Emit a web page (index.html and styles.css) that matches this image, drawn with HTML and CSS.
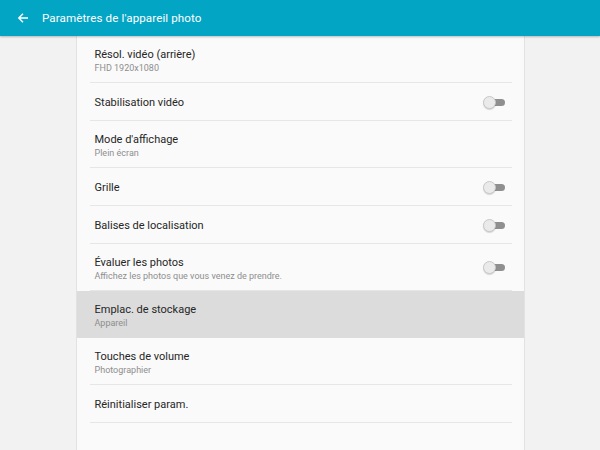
FILE: index.html
```html
<!DOCTYPE html>
<html>
<head>
<meta charset="utf-8">
<title>Paramètres de l'appareil photo</title>
<link rel="stylesheet" href="styles.css">
</head>
<body>
<header class="appbar">
  <svg class="back" width="12" height="12" viewBox="0 0 12 12"><path d="M11 6H2M6 1.8L1.8 6 6 10.2" fill="none" stroke="#fff" stroke-width="1.4"/></svg>
  <h1>Paramètres de l'appareil photo</h1>
</header>
<main class="panel">
  <ul class="settings">
    <li class="row"><div class="inner"><div class="text"><p class="title">Résol. vidéo (arrière)</p><p class="sub">FHD 1920x1080</p></div></div></li>
    <li class="row single"><div class="inner"><div class="text"><p class="title">Stabilisation vidéo</p></div><span class="switch"></span></div></li>
    <li class="row"><div class="inner"><div class="text"><p class="title">Mode d'affichage</p><p class="sub">Plein écran</p></div></div></li>
    <li class="row single"><div class="inner"><div class="text"><p class="title">Grille</p></div><span class="switch"></span></div></li>
    <li class="row single"><div class="inner"><div class="text"><p class="title">Balises de localisation</p></div><span class="switch"></span></div></li>
    <li class="row"><div class="inner"><div class="text"><p class="title">Évaluer les photos</p><p class="sub">Affichez les photos que vous venez de prendre.</p></div><span class="switch"></span></div></li>
    <li class="row pressed"><div class="inner"><div class="text"><p class="title">Emplac. de stockage</p><p class="sub">Appareil</p></div></div></li>
    <li class="row"><div class="inner"><div class="text"><p class="title">Touches de volume</p><p class="sub">Photographier</p></div></div></li>
    <li class="row single"><div class="inner"><div class="text"><p class="title">Réinitialiser param.</p></div></div></li>
  </ul>
</main>
</body>
</html>
```
FILE: styles.css
```css
html, body { margin: 0; padding: 0; }
body { background: #f2f2f2; font-family: Roboto, "Liberation Sans", sans-serif; color: #222; overflow: hidden; }
.appbar { position: relative; z-index: 1; display: flex; align-items: center; height: 36px; padding-left: 17px; background: #03a5c5; box-shadow: 0 1px 2px rgba(0, 0, 0, .25); }
.appbar .back { display: block; }
.appbar h1 { margin: 0 0 0 13px; font-size: 11.6px; font-weight: 400; color: #fff; letter-spacing: .1px; }
.panel { width: 447px; min-height: calc(100vh - 36px); margin: 0 auto; border-left: 1px solid #e2e2e2; border-right: 1px solid #e2e2e2; background: #fafafa; }
.settings { margin: 0; padding: 0; list-style: none; }
.row { padding: 0 12px 0 13px; }
.row.pressed { background: #dcdcdc; }
.inner { display: flex; align-items: center; height: 46px; padding: 0 7px 0 5px; border-bottom: 1px solid #e6e6e6; }
.row.single .inner { height: 37px; }
.row.pressed .inner { border-bottom-color: transparent; }
.text { flex: 1; padding-top: 3px; }
.title { margin: 0; font-size: 11px; line-height: 14px; color: #262626; }
.sub { margin: 0; font-size: 9px; line-height: 12px; color: #8e8e8e; }
.switch { position: relative; width: 22px; height: 12px; }
.switch::before { content: ""; position: absolute; left: 6px; top: 3px; width: 16px; height: 7px; border-radius: 4px; background: #8f8f8f; }
.switch::after { content: ""; position: absolute; left: 0; top: 0; width: 11px; height: 11px; border-radius: 50%; background: #eaeaea; border: .5px solid #c8c8c8; box-shadow: 0 1px 1px rgba(0, 0, 0, .15); }
```
